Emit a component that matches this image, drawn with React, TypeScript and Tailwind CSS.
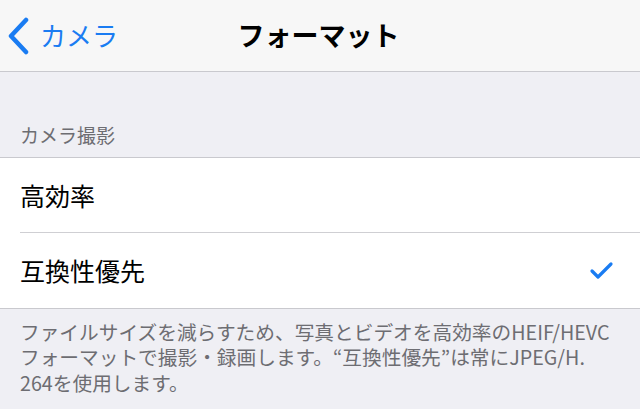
import React from 'react'

const font = { fontFamily: '"Noto Sans CJK JP", "Noto Sans", sans-serif' }

const footerLines = [
  'ファイルサイズを減らすため、写真とビデオを高効率のHEIF/HEVC',
  'フォーマットで撮影・録画します。“互換性優先”は常にJPEG/H.',
  '264を使用します。',
]

function Chevron() {
  return (
    <svg width="24" height="38" viewBox="0 0 24 38" className="shrink-0">
      <polyline points="20,3 5,19 20,35" fill="none" stroke="#1a7cf2" strokeWidth="4.5" strokeLinecap="round" strokeLinejoin="round" />
    </svg>
  )
}

function Check() {
  return (
    <svg width="26" height="20" viewBox="0 0 26 20">
      <polyline points="3,10 9,16 22,3" fill="none" stroke="#1a7cf2" strokeWidth="3.2" strokeLinecap="round" strokeLinejoin="round" />
    </svg>
  )
}

export default function App() {
  return (
    <div className="w-[640px] h-[409px] overflow-hidden bg-[#efeff4]" style={font}>
      <header className="h-[72px] bg-[#f7f7f7] border-b border-[#c9c9ce] grid grid-cols-3 items-center">
        <div className="flex items-center pl-[6px] gap-[10px] text-[#1a7cf2] text-[26px] leading-none">
          <Chevron />
          <span className="pb-[2px]">カメラ</span>
        </div>
        <div className="flex justify-center text-[27px] font-bold text-black leading-none whitespace-nowrap pb-[2px] -ml-[3px]">
          フォーマット
        </div>
        <div />
      </header>

      <div className="h-[85px] flex items-end px-[20px] pb-[11px] text-[19px] leading-[22px] text-[#6d6d72]">
        カメラ撮影
      </div>

      <div className="bg-white border-y border-[#c9c9ce]">
        <div className="h-[75px] flex items-center pl-[20px]">
          <div className="flex-1 h-full flex items-center border-b border-[#cfcfd3] text-[25px] text-black leading-none">
            高効率
          </div>
        </div>
        <div className="h-[75px] flex items-center px-[20px] text-[25px] text-black leading-none">
          <span className="flex-1">互換性優先</span>
          <div className="pr-[5px]"><Check /></div>
        </div>
      </div>

      <div className="px-[20px] pt-[10px] flex flex-col text-[19.7px] text-[#6d6d72] whitespace-nowrap">
        {footerLines.map((l) => (
          <div key={l} className="h-[25.5px] flex items-center leading-none">{l}</div>
        ))}
      </div>
    </div>
  )
}
